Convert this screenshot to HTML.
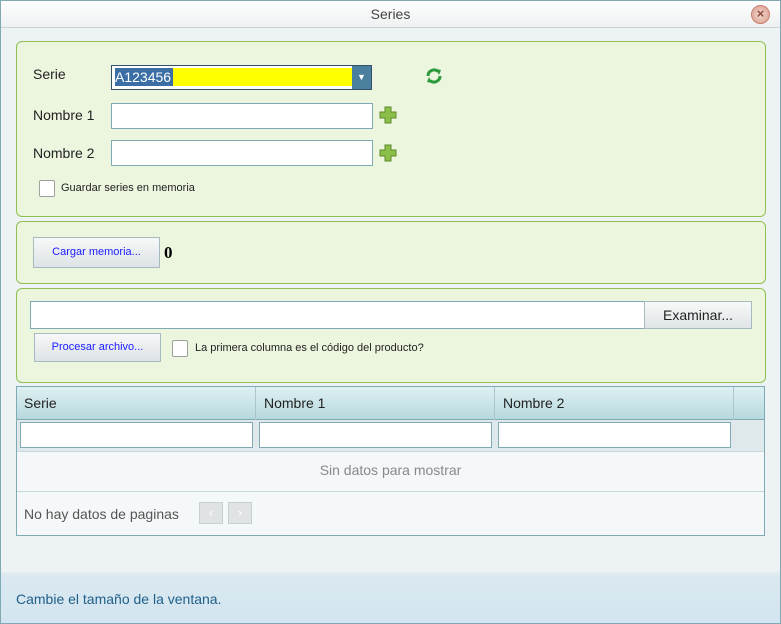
<!DOCTYPE html>
<html><head><meta charset="utf-8"><style>
*{box-sizing:border-box;margin:0;padding:0}
html,body{width:781px;height:624px;overflow:hidden}
body{font-family:"Liberation Sans",sans-serif;background:#edf2f4;position:relative}
.a{position:absolute}
.panel{position:absolute;left:16px;width:750px;background:#ecf5de;border:1px solid #8fc050;border-radius:6px}
.inp{position:absolute;background:#fff;border:1px solid #7fa9b3}
.btn{position:absolute;background:linear-gradient(#f7f8f8,#dde3e6);border:1px solid #a9b9c0;color:#1a1aff;font-size:11px;text-align:center}
.cb{position:absolute;width:16px;height:17px;background:#fff;border:1px solid #a0a0a0;border-radius:2px}
.lbl{position:absolute;font-size:14px;color:#222}
</style></head><body>
<div class="a" style="left:0;top:0;width:781px;height:28px;background:linear-gradient(#fff,#eef0f1);border-bottom:1px solid #c9d2d6"></div>
<div class="a" style="left:0;top:6px;width:781px;text-align:center;font-size:14px;color:#444">Series</div>
<div class="a" style="left:751px;top:5px;width:19px;height:19px;border-radius:50%;background:radial-gradient(#f2d8cf,#d89a8a);border:1px solid #c9806f;font-size:13px;line-height:16px;text-align:center;color:#8a4a3a;font-weight:bold">×</div>

<div class="panel" style="top:41px;height:176px"></div>
<div class="lbl" style="left:33px;top:66px">Serie</div>
<div class="a" style="left:111px;top:65px;width:261px;height:25px;border:1px solid #35506a;background:#fff"></div>
<div class="a" style="left:115px;top:68px;width:58px;height:18px;background:#3a6ea5;color:#fff;font-size:14px;line-height:18px">A123456</div>
<div class="a" style="left:173px;top:68px;width:179px;height:18px;background:#ffff00"></div>
<div class="a" style="left:352px;top:66px;width:19px;height:23px;background:#4b7f9e;color:#fff;font-size:9px;text-align:center;line-height:23px">▼</div>
<svg class="a" style="left:425px;top:67px" width="18" height="18" viewBox="0 0 18 18"><path d="M3 9a6 6 0 0 1 10-4.5" stroke="#2a9a3a" stroke-width="3" fill="none"/><path d="M15 9a6 6 0 0 1-10 4.5" stroke="#2a9a3a" stroke-width="3" fill="none"/><path d="M11 2l5 1-2 5z M7 16l-5-1 2-5z" fill="#2a9a3a"/></svg>
<div class="lbl" style="left:33px;top:107px">Nombre 1</div>
<div class="inp" style="left:111px;top:103px;width:262px;height:26px"></div>
<div class="lbl" style="left:33px;top:145px">Nombre 2</div>
<div class="inp" style="left:111px;top:140px;width:262px;height:26px"></div>
<svg class="a" style="left:379px;top:106px" width="18" height="18"><path d="M6 1h6v5h5v6h-5v5H6v-5H1V6h5z" fill="#8cbf4a" stroke="#5b8a2a"/></svg>
<svg class="a" style="left:379px;top:144px" width="18" height="18"><path d="M6 1h6v5h5v6h-5v5H6v-5H1V6h5z" fill="#8cbf4a" stroke="#5b8a2a"/></svg>
<div class="cb" style="left:39px;top:180px"></div>
<div class="a" style="left:61px;top:182px;font-size:11px;color:#222">Guardar series en memoria</div>

<div class="panel" style="top:221px;height:63px"></div>
<div class="btn" style="left:33px;top:237px;width:127px;height:31px;line-height:29px">Cargar memoria...</div>
<div class="a" style="left:164px;top:243px;font-family:'Liberation Serif',serif;font-weight:bold;font-size:17px">0</div>

<div class="panel" style="top:288px;height:95px"></div>
<div class="inp" style="left:30px;top:301px;width:615px;height:28px"></div>
<div class="a" style="left:644px;top:301px;width:108px;height:28px;background:linear-gradient(#f7f8f8,#e0e5e7);border:1px solid #a9b9c0;font-size:14px;text-align:center;line-height:26px;color:#222">Examinar...</div>
<div class="btn" style="left:34px;top:333px;width:127px;height:29px;line-height:27px">Procesar archivo...</div>
<div class="cb" style="left:172px;top:340px"></div>
<div class="a" style="left:195px;top:342px;font-size:11px;color:#222">La primera columna es el código del producto?</div>

<div class="a" style="left:16px;top:386px;width:749px;height:150px;border:1px solid #7fa9b3;background:#f4f8f9"></div>
<div class="a" style="left:17px;top:387px;width:747px;height:33px;background:linear-gradient(#dff0f2,#b6d9de);border-bottom:1px solid #7fa9b3"></div>
<div class="a" style="left:255px;top:387px;width:1px;height:64px;background:#a8c6cc"></div>
<div class="a" style="left:494px;top:387px;width:1px;height:64px;background:#a8c6cc"></div>
<div class="a" style="left:733px;top:387px;width:1px;height:64px;background:#a8c6cc"></div>
<div class="lbl" style="left:24px;top:395px">Serie</div>
<div class="lbl" style="left:264px;top:395px">Nombre 1</div>
<div class="lbl" style="left:503px;top:395px">Nombre 2</div>
<div class="a" style="left:17px;top:420px;width:747px;height:32px;background:#dfe9eb;border-bottom:1px solid #c5d8dc"></div>
<div class="inp" style="left:20px;top:422px;width:233px;height:26px"></div>
<div class="inp" style="left:259px;top:422px;width:233px;height:26px"></div>
<div class="inp" style="left:498px;top:422px;width:233px;height:26px"></div>
<div class="a" style="left:17px;top:462px;width:747px;text-align:center;font-size:14px;color:#888">Sin datos para mostrar</div>
<div class="a" style="left:17px;top:491px;width:747px;height:1px;background:#c5d8dc"></div>
<div class="a" style="left:24px;top:506px;font-size:14px;color:#555">No hay datos de paginas</div>
<div class="a" style="left:199px;top:502px;width:24px;height:22px;background:#dfe3e5;border:1px solid #c8cfd2;color:#fff;text-align:center;font-size:13px;line-height:20px">‹</div>
<div class="a" style="left:228px;top:502px;width:24px;height:22px;background:#dfe3e5;border:1px solid #c8cfd2;color:#fff;text-align:center;font-size:13px;line-height:20px">›</div>

<div class="a" style="left:0;top:572px;width:781px;height:52px;background:linear-gradient(#dbe9f1,#d2e5f0);border-top:2px solid #e4ecf0"></div>
<div class="a" style="left:16px;top:591px;font-size:14px;color:#1f5f8a">Cambie el tamaño de la ventana.</div>
<div class="a" style="left:0;top:0;width:781px;height:624px;border:1px solid #7fa9b3;pointer-events:none"></div>
</body></html>
